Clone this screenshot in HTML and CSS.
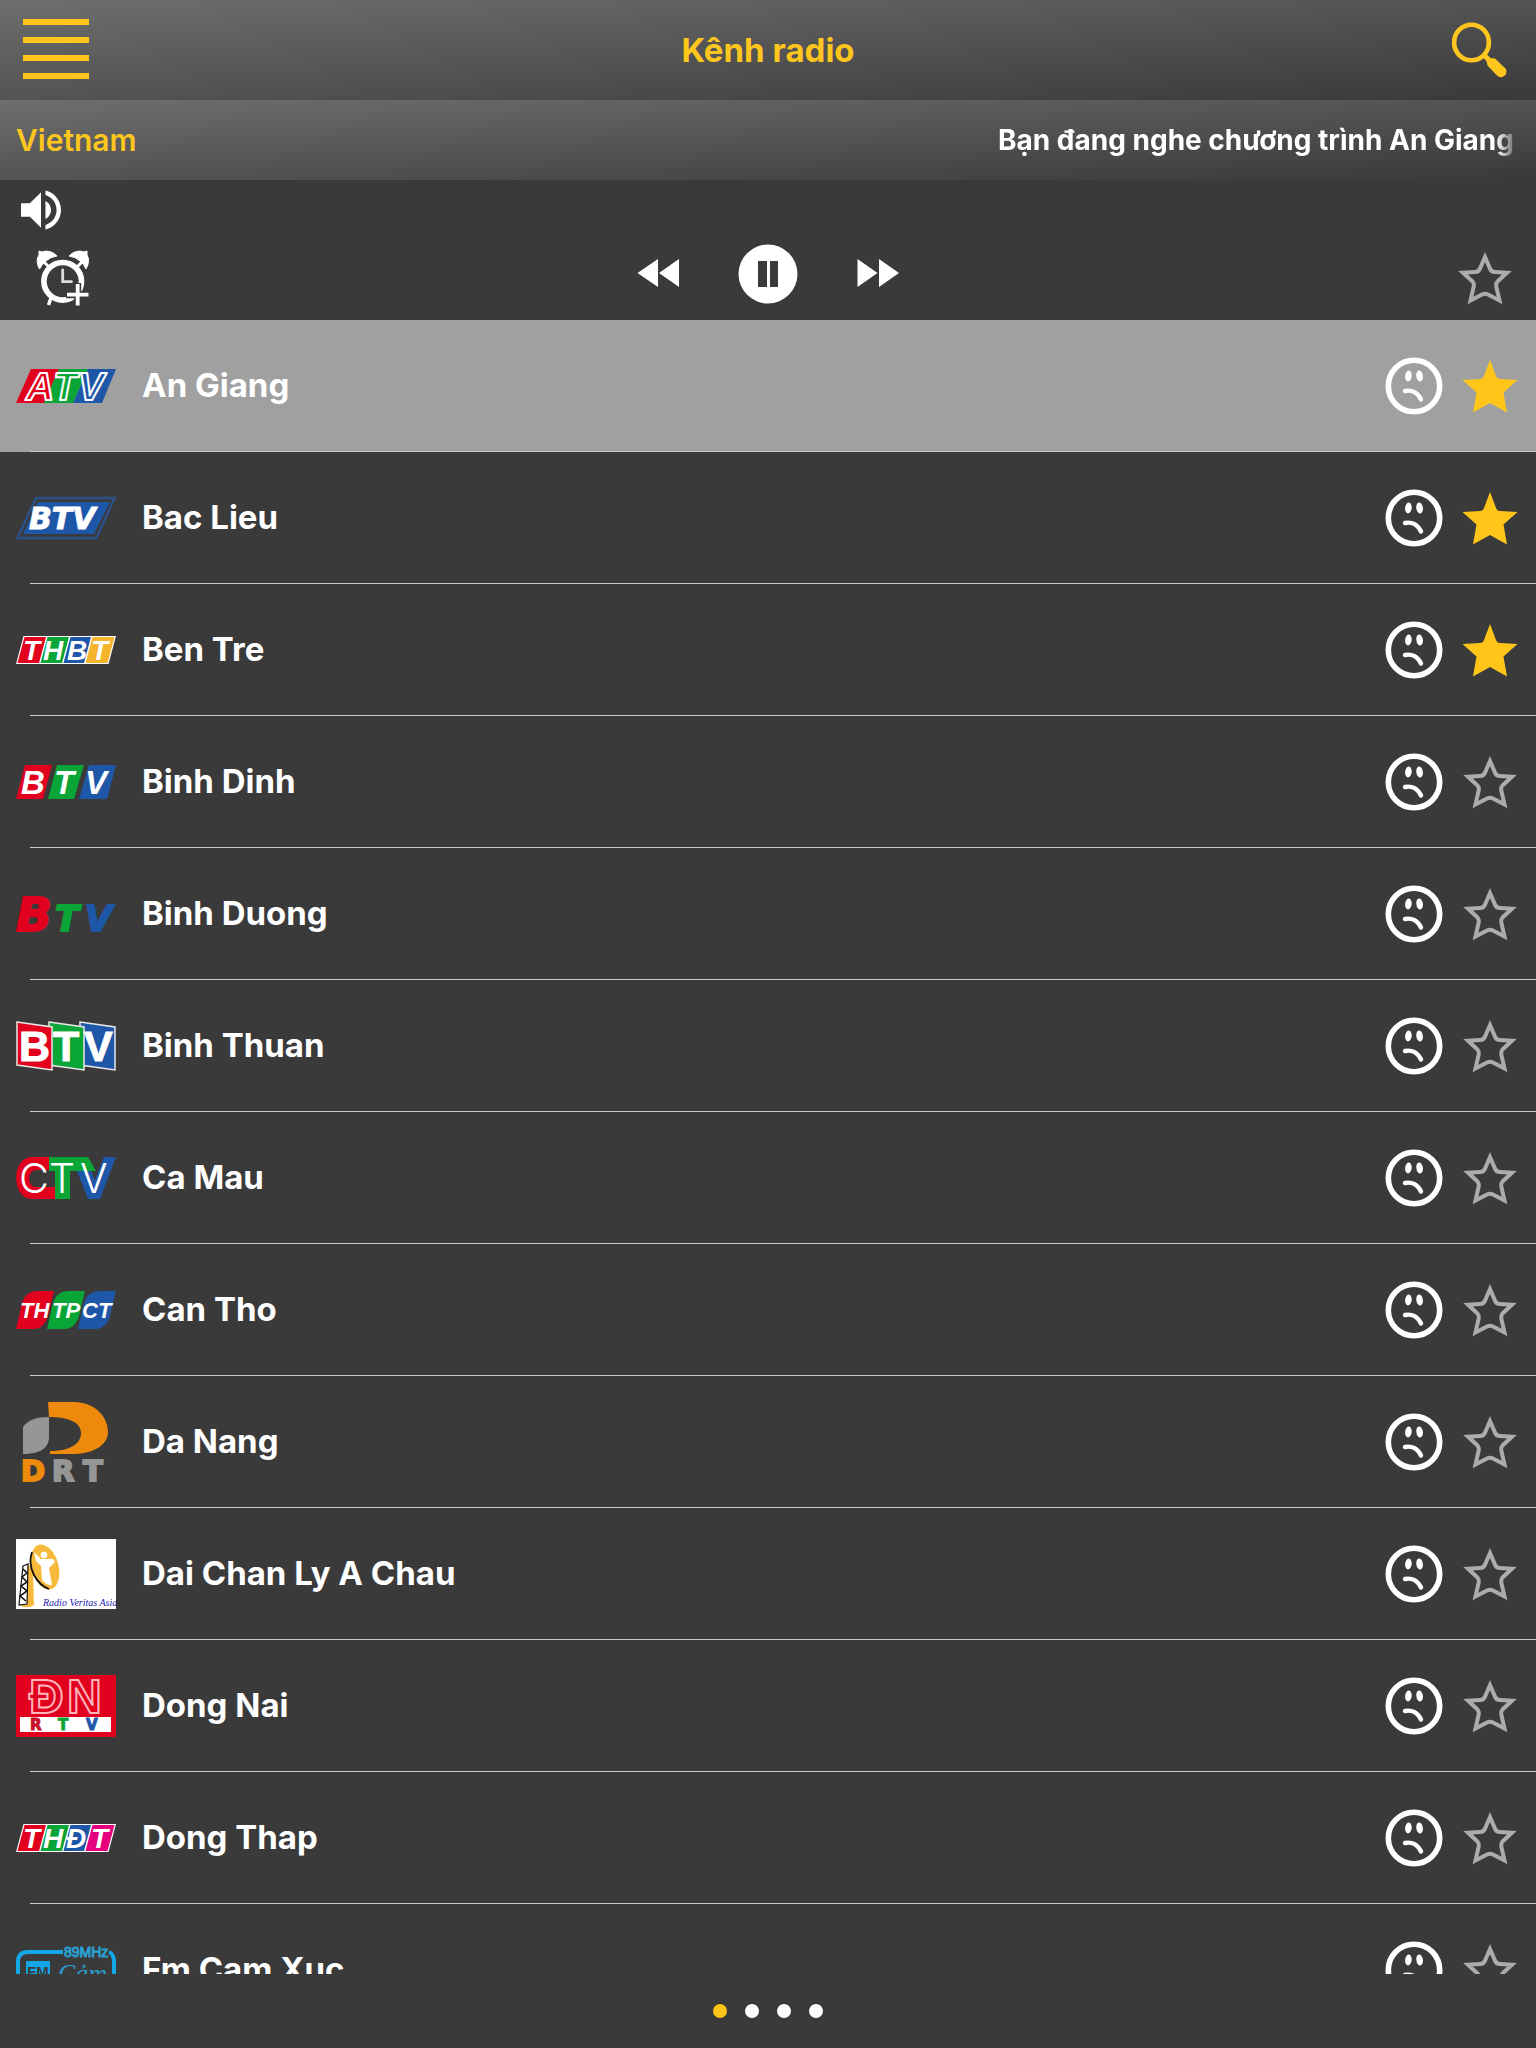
FILE: index.html
```html
<!DOCTYPE html>
<html lang="vi">
<head>
  <meta charset="UTF-8">
  <meta name="viewport" content="width=device-width, initial-scale=1.0">
  <title>Kênh radio</title>
  <link rel="stylesheet" href="styles.css">
</head>
<body>
  <!-- shared icons -->
  <svg class="sprite" aria-hidden="true">
    <symbol id="sad" viewBox="0 0 60 60">
      <circle cx="30" cy="30" r="25.7" fill="none" stroke="#fff" stroke-width="5.6"/>
      <ellipse cx="24.4" cy="20" rx="3.3" ry="5.5" fill="#fff" transform="rotate(6 24.4 20)"/>
      <ellipse cx="35.6" cy="20" rx="3.3" ry="5.5" fill="#fff" transform="rotate(-8 35.6 20)"/>
      <path d="M21 35 C28 33.500 34 37 37 43.500" fill="none" stroke="#fff" stroke-width="4.400" stroke-linecap="round"/>
    </symbol>
    <symbol id="star" viewBox="0 0 60 60">
      <path d="M30 4 L36 20 Q37 23 40 23 L57.500 24 L43.500 36.500 L47 56.500 L30 47 L13 56.500 L16.500 36.500 L2.500 24 L20 23 Q23 23 24 20 Z" fill="#ffc619"/>
    </symbol>
    <symbol id="star-empty" viewBox="0 0 60 60">
      <path d="M30 9 L34.500 19.500 Q36 24 40 24 L52 24.700 L42.500 33.500 Q40.800 35.500 41.200 38 L44.500 52.500 L33 46.500 Q30 44.800 27 46.500 L15.500 52.500 L18.800 38 Q19.200 35.500 17.500 33.500 L8 24.700 L20 24 Q24 24 25.500 19.500 Z" fill="none" stroke="#acacac" stroke-width="4"/>
    </symbol>
  </svg>

  <header class="topbar">
    <button class="icon-btn" type="button" aria-label="Menu">
      <svg width="66" height="62" viewBox="0 0 66 62" fill="#ffc61e">
        <rect width="66" height="6"/><rect y="18" width="66" height="6"/><rect y="36" width="66" height="6"/><rect y="54" width="66" height="6"/>
      </svg>
    </button>
    <h1 class="title">Kênh radio</h1>
    <button class="icon-btn search" type="button" aria-label="Tìm kiếm">
      <svg width="61" height="56" viewBox="0 0 61 56" fill="none" stroke="#ffc61e">
        <ellipse cx="19.500" cy="20.500" rx="17.400" ry="17.800" stroke-width="4.600"/>
        <path d="M32 33 L38 39" stroke-width="5"/>
        <path d="M34.500 39 L38 36 L43 36.500 L54 47 Q56 52 50.500 55 Q47 56 45 53.500 L35.500 43.500 Z" fill="#ffc61e" stroke="none"/>
      </svg>
    </button>
  </header>

  <div class="nowbar">
    <span class="country">Vietnam</span>
    <span class="marquee">Bạn đang nghe chương trình An Giang</span>
  </div>

  <section class="player">
    <button class="icon-btn" type="button" aria-label="Âm lượng">
      <svg width="40" height="40" viewBox="3 3 18 18" fill="#fff">
        <path d="M3 9v6h4l5 5V4L7 9H3zm13.500 3c0-1.770-1.020-3.290-2.500-4.030v8.050c1.480-.73 2.500-2.250 2.500-4.020zM14 3.230v2.060c2.890.86 5 3.540 5 6.710s-2.110 5.850-5 6.710v2.060c4.010-.91 7-4.490 7-8.770s-2.990-7.860-7-8.770z"/>
      </svg>
    </button>
    <div class="controls">
      <button class="icon-btn alarm" type="button" aria-label="Hẹn giờ">
        <svg width="60" height="60" viewBox="0 0 60 60" fill="none" stroke="#fff">
          <path d="M6.500 21 Q2 13 6 7 L6 3 L9 4 Q17 1 24 8 Q17 9 13 13 Q9 16 6.500 21 Z" fill="#fff" stroke="#fff"/>
          <path d="M53 21 Q57.500 13 54 7 L54 3 L51 4 Q43 1 36 8 Q43 9 47 13 Q51 16 53 21 Z" fill="#fff" stroke="#fff"/>
          <path d="M11 14 L17 20 M49 14 L43 20" stroke-width="3"/>
          <circle cx="29.700" cy="33.300" r="18.800" stroke-width="5.600"/>
          <path d="M29.700 22 V33.700 H38.500" stroke-width="2.800" stroke="#ddd" stroke-linecap="round"/>
          <path d="M18 50 L15.500 57" stroke-width="3.500"/>
          <path d="M44.700 35 V59 M33 46.700 H57" stroke="#3a3a3a" stroke-width="7"/>
          <path d="M44.700 36 V57.500 M34 46.700 H55.500" stroke-width="3.800"/>
        </svg>
      </button>
      <div class="transport">
        <button class="icon-btn" type="button" aria-label="Kênh trước">
          <svg width="60" height="60" viewBox="0 0 60 60" fill="#fff"><path d="M9.500 29 L30 15 V43 Z M31 29 L51 15 V43 Z"/></svg>
        </button>
        <button class="icon-btn" type="button" aria-label="Tạm dừng">
          <svg width="60" height="60" viewBox="0 0 60 60"><circle cx="30" cy="30" r="29.500" fill="#fff"/><path d="M20 17h9v26h-9z M32 17h8v26h-8z" fill="#3a3a3a"/></svg>
        </button>
        <button class="icon-btn" type="button" aria-label="Kênh sau">
          <svg width="60" height="60" viewBox="0 0 60 60" fill="#fff"><path d="M9.500 15 L29.500 29 L9.500 43 Z M31 15 L51 29 L31 43 Z"/></svg>
        </button>
      </div>
      <button class="icon-btn favourite" type="button" aria-label="Yêu thích"><svg width="60" height="60"><use href="#star-empty"/></svg></button>
    </div>
  </section>

  <ul class="channels">
    <li class="row active">
      <button class="channel" type="button">
        <svg class="logo" width="100" height="34" viewBox="0 0 100 34">
          <path d="M15 0H43L28 34H0Z" fill="#e2001f"/><path d="M43 0H72L57 34H28Z" fill="#0aa537"/><path d="M72 0H100L86 34H57Z" fill="#1f57a8"/>
          <g font-family="Liberation Sans" font-size="39" font-weight="bold" font-style="italic" stroke="#fff" stroke-width="2" stroke-linejoin="round">
            <text x="10" y="31" fill="#e2001f">A</text><text x="37" y="31" fill="#0aa537">T</text><text x="62" y="31" fill="#1f57a8">V</text>
          </g>
        </svg>
        <span class="name">An Giang</span>
      </button>
      <button class="icon-btn" type="button" aria-label="Báo lỗi An Giang"><svg width="60" height="60"><use href="#sad"/></svg></button>
      <button class="icon-btn" type="button" aria-label="Yêu thích An Giang" aria-pressed="true"><svg width="60" height="60"><use href="#star"/></svg></button>
    </li>
    <li class="row">
      <button class="channel" type="button">
        <svg class="logo" width="100" height="42" viewBox="0 0 100 42">
          <path d="M20 1H98.500L80.500 41H1.500Z" fill="none" stroke="#2c5189" stroke-width="2.400"/>
          <path d="M22 5H94L78 37H7Z" fill="#1f57a8"/>
          <text x="13" y="32" class="dj" font-size="30" stroke="#fff">BTV</text>
        </svg>
        <span class="name">Bac Lieu</span>
      </button>
      <button class="icon-btn" type="button" aria-label="Báo lỗi Bac Lieu"><svg width="60" height="60"><use href="#sad"/></svg></button>
      <button class="icon-btn" type="button" aria-label="Yêu thích Bac Lieu" aria-pressed="true"><svg width="60" height="60"><use href="#star"/></svg></button>
    </li>
    <li class="row">
      <button class="channel" type="button">
        <svg class="logo" width="100" height="28" viewBox="0 0 100 28">
          <path d="M7.500 0H100L92.500 28H0Z" fill="#fff"/>
          <path d="M8.500 1H30L23 27H1.500Z" fill="#e2001f"/><path d="M31.500 1H53L46 27H24.500Z" fill="#0aa537"/><path d="M54.500 1H75L68 27H47.500Z" fill="#1f57a8"/><path d="M76.500 1H98.500L91.500 27H69.500Z" fill="#f6b32c"/>
          <text y="24" class="ls" font-size="28"><tspan x="7">T</tspan><tspan x="27">H</tspan><tspan x="51">B</tspan><tspan x="75">T</tspan></text>
        </svg>
        <span class="name">Ben Tre</span>
      </button>
      <button class="icon-btn" type="button" aria-label="Báo lỗi Ben Tre"><svg width="60" height="60"><use href="#sad"/></svg></button>
      <button class="icon-btn" type="button" aria-label="Yêu thích Ben Tre" aria-pressed="true"><svg width="60" height="60"><use href="#star"/></svg></button>
    </li>
    <li class="row">
      <button class="channel" type="button">
        <svg class="logo" width="100" height="34" viewBox="0 0 100 34">
          <path d="M9 0H36L27 34H0Z" fill="#e2001f"/><path d="M41 0H68L58 34H32Z" fill="#0aa537"/><path d="M73 0H100L91 34H63Z" fill="#1f57a8"/>
          <text y="29" class="ls" font-size="33"><tspan x="5">B</tspan><tspan x="38">T</tspan><tspan x="69">V</tspan></text>
        </svg>
        <span class="name">Binh Dinh</span>
      </button>
      <button class="icon-btn" type="button" aria-label="Báo lỗi Binh Dinh"><svg width="60" height="60"><use href="#sad"/></svg></button>
      <button class="icon-btn" type="button" aria-label="Yêu thích Binh Dinh"><svg width="60" height="60"><use href="#star-empty"/></svg></button>
    </li>
    <li class="row">
      <button class="channel" type="button">
        <svg class="logo" width="100" height="36" viewBox="0 0 100 36">
          <g class="dj solid" stroke-width="2">
            <text x="0" y="35" font-size="47" fill="#e2001f" stroke="#e2001f">B</text>
            <text x="39" y="35" font-size="35" fill="#0aa537" stroke="#0aa537">T</text>
            <text x="69" y="35" font-size="35" fill="#1f57a8" stroke="#1f57a8">V</text>
          </g>
        </svg>
        <span class="name">Binh Duong</span>
      </button>
      <button class="icon-btn" type="button" aria-label="Báo lỗi Binh Duong"><svg width="60" height="60"><use href="#sad"/></svg></button>
      <button class="icon-btn" type="button" aria-label="Yêu thích Binh Duong"><svg width="60" height="60"><use href="#star-empty"/></svg></button>
    </li>
    <li class="row">
      <button class="channel" type="button">
        <svg class="logo" width="100" height="50" viewBox="0 0 100 50">
          <g stroke="#e8e8e8" stroke-width="1.500">
            <path d="M64 1L99 6V49L64 44Z" fill="#1f57a8"/><path d="M33 1L68 6V49L33 44Z" fill="#0aa537"/><path d="M1 1L36 6V49L1 44Z" fill="#e2001f"/>
          </g>
          <text y="40" class="ls upright" font-size="43" stroke="#fff"><tspan x="3">B</tspan><tspan x="37">T</tspan><tspan x="68">V</tspan></text>
        </svg>
        <span class="name">Binh Thuan</span>
      </button>
      <button class="icon-btn" type="button" aria-label="Báo lỗi Binh Thuan"><svg width="60" height="60"><use href="#sad"/></svg></button>
      <button class="icon-btn" type="button" aria-label="Yêu thích Binh Thuan"><svg width="60" height="60"><use href="#star-empty"/></svg></button>
    </li>
    <li class="row">
      <button class="channel" type="button">
        <svg class="logo" width="100" height="42" viewBox="0 0 100 42">
          <path d="M39 0H16C-5 0 -5 42 16 42H39V30H20C11 30 11 13 20 13H39Z" fill="#e2001f"/>
          <path d="M33 0H72L80 14H54V42H39V14H33Z" fill="#0aa537"/>
          <path d="M61 14H75L79 23L88 0H100L84 42H72Z" fill="#1f57a8"/>
          <text y="36" class="thin" font-size="41"><tspan x="3">C</tspan><tspan x="33">T</tspan><tspan x="64">V</tspan></text>
        </svg>
        <span class="name">Ca Mau</span>
      </button>
      <button class="icon-btn" type="button" aria-label="Báo lỗi Ca Mau"><svg width="60" height="60"><use href="#sad"/></svg></button>
      <button class="icon-btn" type="button" aria-label="Yêu thích Ca Mau"><svg width="60" height="60"><use href="#star-empty"/></svg></button>
    </li>
    <li class="row">
      <button class="channel" type="button">
        <svg class="logo" width="100" height="38" viewBox="0 0 100 38">
          <path d="M0 38L6 12Q10 0 21 0H38L32 25Q28 38 17 38Z" fill="#e2001f"/>
          <path d="M31 38L37 12Q41 0 52 0H69L63 25Q59 38 48 38Z" fill="#0aa537"/>
          <path d="M62 38L68 12Q72 0 83 0H100L94 25Q90 38 79 38Z" fill="#1f57a8"/>
          <text y="27" class="ls" font-size="22"><tspan x="4">TH</tspan><tspan x="36">TP</tspan><tspan x="66">CT</tspan></text>
        </svg>
        <span class="name">Can Tho</span>
      </button>
      <button class="icon-btn" type="button" aria-label="Báo lỗi Can Tho"><svg width="60" height="60"><use href="#sad"/></svg></button>
      <button class="icon-btn" type="button" aria-label="Yêu thích Can Tho"><svg width="60" height="60"><use href="#star-empty"/></svg></button>
    </li>
    <li class="row">
      <button class="channel" type="button">
        <svg class="logo" width="100" height="80" viewBox="0 0 100 80">
          <path d="M32 0H58C78 0 92 14 92 30C92 44 76 52 56 52H34V49C52 49 65 43 65 31C65 20 52 15 33 15Z" fill="#ee8a0b"/>
          <path d="M33 15V35C33 46 24 52 7 52V25C12 18 20 15 33 15Z" fill="#969696"/>
          <g class="dj solid upright" font-size="29" stroke-width="2">
            <text x="5" y="79" fill="#ee8a0b" stroke="#ee8a0b">D</text><text x="36" y="79" fill="#969696" stroke="#969696">R</text><text x="67" y="79" fill="#969696" stroke="#969696">T</text>
          </g>
        </svg>
        <span class="name">Da Nang</span>
      </button>
      <button class="icon-btn" type="button" aria-label="Báo lỗi Da Nang"><svg width="60" height="60"><use href="#sad"/></svg></button>
      <button class="icon-btn" type="button" aria-label="Yêu thích Da Nang"><svg width="60" height="60"><use href="#star-empty"/></svg></button>
    </li>
    <li class="row">
      <button class="channel" type="button">
        <svg class="logo" width="100" height="70" viewBox="0 0 100 70">
          <rect width="100" height="70" fill="#fff"/>
          <path d="M12 25L17 32L18 66Q12 70 5 67Z" fill="#f6b93b"/>
          <path d="M7 27L12 25L11 65L3 66Z" fill="#fff" stroke="#111" stroke-width="1.200"/>
          <path d="M7 30L11 34L6 38L11 43L5 47L11 52L4 57L10 62" fill="none" stroke="#111" stroke-width="1.600"/>
          <ellipse cx="29" cy="28" rx="13.500" ry="23" transform="rotate(-15 29 28)" fill="#f6b93b"/>
          <path d="M16 13Q12 24 18 36Q24 47 33 50" fill="none" stroke="#111" stroke-width="1.800"/>
          <circle cx="28" cy="16" r="3.300" fill="#fff"/>
          <path d="M18 13L25 20H31L37 20L39 23L33 29L36 46Q31 47 26 41L25 27L20 22Z" fill="#fff"/>
          <text x="27" y="67" class="script">Radio Veritas Asia</text>
        </svg>
        <span class="name">Dai Chan Ly A Chau</span>
      </button>
      <button class="icon-btn" type="button" aria-label="Báo lỗi Dai Chan Ly A Chau"><svg width="60" height="60"><use href="#sad"/></svg></button>
      <button class="icon-btn" type="button" aria-label="Yêu thích Dai Chan Ly A Chau"><svg width="60" height="60"><use href="#star-empty"/></svg></button>
    </li>
    <li class="row">
      <button class="channel" type="button">
        <svg class="logo" width="100" height="62" viewBox="0 0 100 62">
          <rect width="100" height="62" fill="#e2001f"/>
          <text y="38" font-family="Liberation Sans" font-weight="bold" font-size="48" fill="#e2001f" stroke="#ffb3ba" stroke-width="2"><tspan x="13">Đ</tspan><tspan x="51">N</tspan></text>
          <rect x="4" y="42" width="91" height="15" fill="#fff"/>
          <g class="dj solid upright" font-size="15">
            <text x="14" y="55" fill="#c8102e" stroke="#c8102e">R</text><text x="42" y="55" fill="#0aa537" stroke="#0aa537">T</text><text x="70" y="55" fill="#1f57a8" stroke="#1f57a8">V</text>
          </g>
        </svg>
        <span class="name">Dong Nai</span>
      </button>
      <button class="icon-btn" type="button" aria-label="Báo lỗi Dong Nai"><svg width="60" height="60"><use href="#sad"/></svg></button>
      <button class="icon-btn" type="button" aria-label="Yêu thích Dong Nai"><svg width="60" height="60"><use href="#star-empty"/></svg></button>
    </li>
    <li class="row">
      <button class="channel" type="button">
        <svg class="logo" width="100" height="28" viewBox="0 0 100 28">
          <path d="M7.500 0H100L92.500 28H0Z" fill="#fff"/>
          <path d="M8.500 1H30L23 27H1.500Z" fill="#e2001f"/><path d="M31.500 1H53L46 27H24.500Z" fill="#0aa537"/><path d="M54.500 1H75L68 27H47.500Z" fill="#1f57a8"/><path d="M76.500 1H98.500L91.500 27H69.500Z" fill="#e5007e"/>
          <text y="24" class="ls" font-size="28"><tspan x="7">T</tspan><tspan x="27">H</tspan><tspan x="50">Đ</tspan><tspan x="75">T</tspan></text>
        </svg>
        <span class="name">Dong Thap</span>
      </button>
      <button class="icon-btn" type="button" aria-label="Báo lỗi Dong Thap"><svg width="60" height="60"><use href="#sad"/></svg></button>
      <button class="icon-btn" type="button" aria-label="Yêu thích Dong Thap"><svg width="60" height="60"><use href="#star-empty"/></svg></button>
    </li>
    <li class="row">
      <button class="channel" type="button">
        <svg class="logo" width="100" height="56" viewBox="0 0 100 56">
          <path d="M47 10H12Q2 10 2 20V54H98V20Q98 12 93 10" fill="none" stroke="#14a7e6" stroke-width="4"/>
          <text x="48" y="15" font-family="Liberation Sans" font-weight="400" font-size="14" fill="#2b9fd0" stroke="#2b9fd0">89MHz</text>
          <rect x="10" y="19" width="24" height="30" fill="#14a7e6"/>
          <text x="11" y="35" font-family="Liberation Sans" font-weight="bold" font-size="15" fill="#3a3a3a">FM</text>
          <text x="42" y="40" font-family="Liberation Serif" font-weight="400" font-style="italic" font-size="26" fill="#2b9fd0">Cảm</text>
        </svg>
        <span class="name">Fm Cam Xuc</span>
      </button>
      <button class="icon-btn" type="button" aria-label="Báo lỗi Fm Cam Xuc"><svg width="60" height="60"><use href="#sad"/></svg></button>
      <button class="icon-btn" type="button" aria-label="Yêu thích Fm Cam Xuc"><svg width="60" height="60"><use href="#star-empty"/></svg></button>
    </li>
  </ul>

  <nav class="pager" aria-label="Trang">
    <button class="dot current" type="button" aria-label="Trang 1"></button>
    <button class="dot" type="button" aria-label="Trang 2"></button>
    <button class="dot" type="button" aria-label="Trang 3"></button>
    <button class="dot" type="button" aria-label="Trang 4"></button>
  </nav>
</body>
</html>
```

FILE: styles.css
```css
* {
  box-sizing: border-box;
}
body {
  margin: 0;
  height: 100vh;
  display: flex;
  flex-direction: column;
  background-color: #3a3a3a;
  color: #fff;
  font-family: Inter, "Liberation Sans", sans-serif;
  font-weight: 700;
}
button {
  padding: 0;
  border: 0;
  background: none;
  color: inherit;
  font: inherit;
  cursor: pointer;
}
.sprite {
  display: none;
}
.icon-btn {
  display: block;
  flex: none;
}
.icon-btn svg {
  display: block;
}

/* top bars */
.topbar,
.nowbar {
  flex: none;
  background: linear-gradient(to bottom right, #6e6e6e, #393939);
}
.topbar {
  height: 100px;
  padding: 0 23px;
  display: grid;
  grid-template-columns: 1fr auto 1fr;
  align-items: center;
}
.title {
  margin: 0;
  font-size: 33px;
  font-weight: 700;
  color: #ffc61e;
}
.search {
  justify-self: end;
}
.nowbar {
  height: 80px;
  padding: 0 16px;
  display: flex;
  align-items: center;
  justify-content: space-between;
}
.country {
  font-size: 30px;
  font-weight: 600;
  color: #ffc61e;
}
.marquee {
  width: 522px;
  overflow: hidden;
  white-space: nowrap;
  font-size: 28px;
  line-height: 40px;
  -webkit-mask-image: linear-gradient(to left, transparent, #000 24px);
  mask-image: linear-gradient(to left, transparent, #000 24px);
}

/* player */
.player {
  flex: none;
  height: 140px;
  padding: 10px 21px 12px;
}
.controls {
  height: 64px;
  margin-top: 14px;
  display: grid;
  grid-template-columns: 1fr auto 1fr;
}
.transport {
  display: flex;
  align-items: flex-start;
  gap: 50px;
}
.alarm {
  align-self: end;
  justify-self: start;
  margin-left: 12px;
}
.favourite {
  align-self: end;
  justify-self: end;
}

/* channel list */
.channels {
  flex: 1;
  min-height: 0;
  margin: 0;
  padding: 0;
  list-style: none;
  overflow-y: auto;
  scrollbar-width: none;
}
.row {
  position: relative;
  height: 132px;
  padding: 0 16px;
  display: flex;
  align-items: center;
  gap: 16px;
}
.row::after {
  content: "";
  position: absolute;
  left: 30px;
  right: 0;
  bottom: 0;
  height: 1px;
  background-color: #c8c8cc;
}
.row.active {
  background-color: #a0a0a0;
}
.channel {
  flex: 1;
  height: 100%;
  display: flex;
  align-items: center;
  gap: 26px;
  text-align: left;
}
.name {
  padding-bottom: 2px;
  font-size: 33px;
}

/* lettering inside the logos */
.logo {
  flex: none;
  overflow: visible;
}
.dj {
  font-family: "DejaVu Sans", sans-serif;
  font-weight: bold;
  font-style: italic;
  fill: #fff;
}
.ls {
  font-family: "Liberation Sans", sans-serif;
  font-weight: bold;
  font-style: italic;
  fill: #fff;
}
.upright {
  font-style: normal;
}
.thin {
  font-family: Inter, sans-serif;
  font-weight: 300;
  fill: #fff;
}
.script {
  font-family: "Liberation Serif", serif;
  font-size: 10px;
  font-style: italic;
  font-weight: 400;
  fill: #2222b0;
}

/* pager */
.pager {
  flex: none;
  height: 74px;
  display: flex;
  align-items: center;
  justify-content: center;
  gap: 18px;
}
.dot {
  width: 14px;
  height: 14px;
  border-radius: 50%;
  background-color: #fff;
}
.dot.current {
  background-color: #ffc619;
}
```
